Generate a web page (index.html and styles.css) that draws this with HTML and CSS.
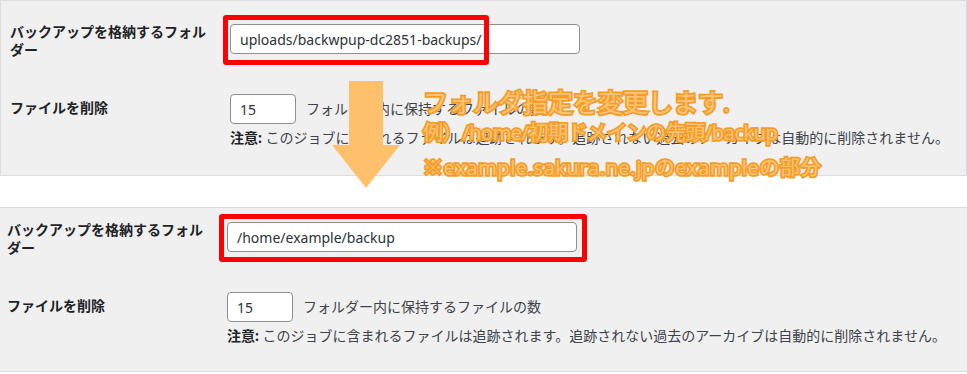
FILE: index.html
```html
<!DOCTYPE html>
<html lang="ja">
<head>
    <meta charset="UTF-8">
    <meta name="viewport" content="width=device-width, initial-scale=1.0">
    <title>バックアップ先フォルダーの変更</title>
    <link rel="stylesheet" href="styles.css">
</head>

<body>
    <div class="page">
        <!-- 変更前 -->
        <section class="panel panel-before">
            <div class="row">
                <div class="label">バックアップを格納するフォルダー</div>
                <div class="field field-top">
                    <input type="text" class="text-input wide" value="uploads/backwpup-dc2851-backups/">
                </div>
            </div>
            <div class="row row-files">
                <div class="label label-files">ファイルを削除</div>
                <div class="field">
                    <div class="inline">
                        <input type="text" class="text-input small" value="15">
                        <span class="desc">フォルダー内に保持するファイルの数</span>
                    </div>
                    <p class="note"><strong>注意:</strong> このジョブに含まれるファイルは追跡されます。追跡されない過去のアーカイブは自動的に削除されません。</p>
                </div>
            </div>
        </section>

        <!-- 変更後 -->
        <section class="panel panel-after">
            <div class="row">
                <div class="label">バックアップを格納するフォルダー</div>
                <div class="field field-top">
                    <input type="text" class="text-input wide" value="/home/example/backup">
                </div>
            </div>
            <div class="row row-files">
                <div class="label label-files">ファイルを削除</div>
                <div class="field">
                    <div class="inline">
                        <input type="text" class="text-input small" value="15">
                        <span class="desc">フォルダー内に保持するファイルの数</span>
                    </div>
                    <p class="note"><strong>注意:</strong> このジョブに含まれるファイルは追跡されます。追跡されない過去のアーカイブは自動的に削除されません。</p>
                </div>
            </div>
        </section>

        <!-- 注釈（赤枠・矢印・説明文） -->
        <div class="mark mark-before"></div>
        <div class="mark mark-after"></div>
        <svg class="arrow" width="68" height="107" viewBox="0 0 68 107">
            <polygon points="17,0 51,0 51,64 68,64 34,107 0,64 17,64" fill="#fec06b"/>
        </svg>
        <div class="callout">
            <div class="callout-title">フォルダ指定を変更します.</div>
            <div class="callout-line callout-path">例）/home/初期ドメインの先頭/backup</div>
            <div class="callout-line callout-last">※example.sakura.ne.jpのexampleの部分</div>
        </div>
    </div>
</body>

</html>
```

FILE: styles.css
```css
body, html {
    margin: 0;
    padding: 0;
    background-color: #fff;
}

body {
    font-family: "Noto Sans", "Noto Sans CJK JP", sans-serif;
    font-size: 14px;
    color: #3c434a;
}

.page {
    position: relative;
    width: 967px;
}

/* 設定パネル */
.panel {
    background-color: #f0f0f0;
    border-top: 1px solid #dcdcde;
    border-bottom: 1px solid #dcdcde;
}

.panel-before {
    border-left: 1px solid #dcdcde;
    border-right: 1px solid #dcdcde;
    padding: 22px 0 27px 9px;
}

.panel-after {
    margin-top: 31px;
    padding: 13px 0 25px 7px;
}

.row {
    display: grid;
    grid-template-columns: 220px 1fr;
}

.row-files {
    margin-top: 35px;
}

.label {
    width: 200px;
    font-weight: bold;
    color: #1d2327;
    line-height: 18px;
}

.label-files {
    padding-top: 5px;
}

.field-top {
    padding-top: 1px;
}

.text-input {
    box-sizing: border-box;
    height: 30px;
    margin: 0;
    padding: 0 9px;
    border: 1px solid #8c8f94;
    border-radius: 4px;
    background-color: #fff;
    color: #2c3338;
    font-family: "Noto Sans", "Noto Sans CJK JP", sans-serif;
    font-size: 14px;
}

.wide {
    width: 350px;
}

.small {
    width: 66px;
}

.inline {
    display: flex;
    align-items: center;
    gap: 10px;
}

.desc {
    line-height: 20px;
}

.note {
    margin: 4px 0 0;
    line-height: 20px;
}

.note strong {
    color: #1d2327;
}

/* 赤枠 */
.mark {
    position: absolute;
    box-sizing: border-box;
    border: 5px solid #ff0000;
    border-radius: 3px;
}

.mark-before {
    left: 223px;
    top: 15px;
    width: 266px;
    height: 50px;
}

.mark-after {
    left: 219px;
    top: 214px;
    width: 368px;
    height: 48px;
}

/* 矢印 */
.arrow {
    position: absolute;
    left: 332px;
    top: 81px;
}

/* 説明文 */
.callout {
    position: absolute;
    left: 423px;
    top: 87px;
    font-family: "Open Sans", "Noto Sans CJK JP", sans-serif;
    font-weight: 400;
    color: #ffc473;
    -webkit-text-stroke: 3.5px #f59c28;
    paint-order: stroke fill;
    white-space: nowrap;
}

.callout-title {
    font-size: 25px;
    line-height: 30px;
}

.callout-line {
    font-size: 20px;
    line-height: 32px;
}

.callout-path {
    letter-spacing: -0.4px;
}

.callout-last {
    line-height: 38px;
    letter-spacing: 0.6px;
}
```
